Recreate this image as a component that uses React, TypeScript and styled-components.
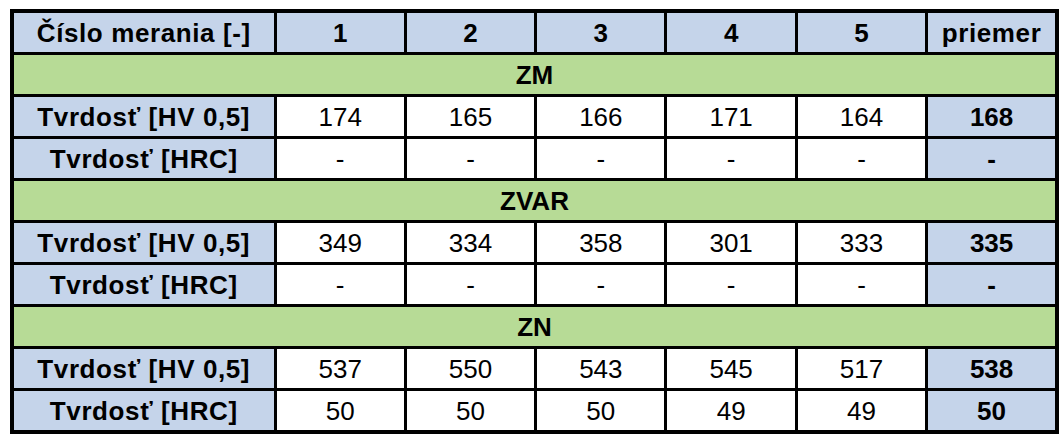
import React from "react";
import styled, { createGlobalStyle } from "styled-components";

const GlobalStyle = createGlobalStyle`
  html, body {
    margin: 0;
    padding: 0;
    background: #ffffff;
  }
  body {
    font-family: "Liberation Sans", Arial, sans-serif;
    color: #000;
  }
`;

const BLUE = "#c5d4ea";
const GREEN = "#b7db96";

type Group = {
  name: string;
  hv: string[];
  hvAvg: string;
  hrc: string[];
  hrcAvg: string;
};

const groups: Group[] = [
  { name: "ZM", hv: ["174", "165", "166", "171", "164"], hvAvg: "168", hrc: ["-", "-", "-", "-", "-"], hrcAvg: "-" },
  { name: "ZVAR", hv: ["349", "334", "358", "301", "333"], hvAvg: "335", hrc: ["-", "-", "-", "-", "-"], hrcAvg: "-" },
  { name: "ZN", hv: ["537", "550", "543", "545", "517"], hvAvg: "538", hrc: ["50", "50", "50", "49", "49"], hrcAvg: "50" },
];

const Page = styled.div`
  padding: 9px 0 0 10px;
`;

const Table = styled.table`
  width: 1049px;
  table-layout: fixed;
  border-collapse: collapse;
  border: 4px solid #000;
`;

const Cell = styled.td<{ $bg?: string; $bold?: boolean }>`
  height: 39px;
  padding: 0;
  border: 3px solid #000;
  background: ${(p) => p.$bg || "#ffffff"};
  font-size: 26px;
  font-weight: ${(p) => (p.$bold ? 700 : 400)};
  text-align: center;
  vertical-align: middle;
  line-height: 1;
  white-space: nowrap;
`;

const LabelCell = styled(Cell)`
  background: ${BLUE};
  font-weight: 700;
  letter-spacing: 0.6px;
`;

const GroupCell = styled(Cell)`
  background: ${GREEN};
  font-weight: 700;
`;

const DataRow = ({ label, values, avg }: { label: string; values: string[]; avg: string }) => (
  <tr>
    <LabelCell>{label}</LabelCell>
    {values.map((v, i) => (
      <Cell key={i}>{v}</Cell>
    ))}
    <Cell $bg={BLUE} $bold>{avg}</Cell>
  </tr>
);

const App = () => {
  return (
    <Page>
      <GlobalStyle />
      <Table>
        <colgroup>
          <col style={{ width: 263 }} />
          <col />
          <col />
          <col />
          <col />
          <col />
          <col />
        </colgroup>
        <tbody>
          <tr>
            <LabelCell>Číslo merania [-]</LabelCell>
            {["1", "2", "3", "4", "5"].map((n) => (
              <Cell key={n} $bg={BLUE} $bold>{n}</Cell>
            ))}
            <LabelCell>priemer</LabelCell>
          </tr>
          {groups.map((g) => (
            <React.Fragment key={g.name}>
              <tr>
                <GroupCell colSpan={7}>{g.name}</GroupCell>
              </tr>
              <DataRow label="Tvrdosť [HV 0,5]" values={g.hv} avg={g.hvAvg} />
              <DataRow label="Tvrdosť [HRC]" values={g.hrc} avg={g.hrcAvg} />
            </React.Fragment>
          ))}
        </tbody>
      </Table>
    </Page>
  );
};

export default App;
